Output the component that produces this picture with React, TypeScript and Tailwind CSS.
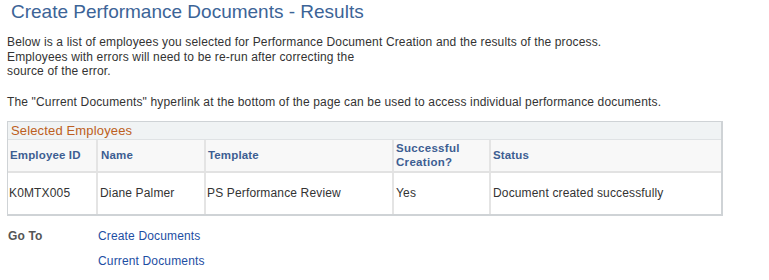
import React from "react";

export default function App() {
  const font = { fontFamily: '"Liberation Sans", Arial, sans-serif' };
  return (
    <div className="w-[769px] h-[280px] bg-white text-[12px] text-[#333333] tracking-[0.15px]" style={font}>
      <div className="pl-[11px] pt-[1px] text-[19px] leading-[22px] tracking-[0px] text-[#3c6497]">
        Create Performance Documents - Results
      </div>
      <div className="pl-[7px] pt-[12px] leading-[14.5px]">
        <div>Below is a list of employees you selected for Performance Document Creation and the results of the process.</div>
        <div>Employees with errors will need to be re-run after correcting the</div>
        <div>source of the error.</div>
        <div className="h-[16.5px]" />
        <div>The "Current Documents" hyperlink at the bottom of the page can be used to access individual performance documents.</div>
      </div>
      <div className="ml-[7px] mt-[11px] w-[716px] border-t border-l border-r-2 border-b-2 border-[#cfd3d6]">
        <div className="h-[18px] bg-[#f0f3f4] border-b border-[#dfe2e4] pl-[3px] text-[13px] leading-[18px] text-[#bd5f22]">
          Selected Employees
        </div>
        <div className="flex h-[33px] bg-[#f8f8f8] border-b-2 border-[#e2e2e2] text-[11.5px] font-bold text-[#3d5e92] leading-[14px]">
          <div className="w-[90px] flex items-center pl-[2px] border-r-2 border-[#e4e4e4]">Employee ID</div>
          <div className="w-[108px] flex items-center pl-[3px] border-r-2 border-[#e4e4e4]">Name</div>
          <div className="w-[188px] flex items-center pl-[2px] border-r-2 border-[#e4e4e4]">Template</div>
          <div className="w-[97px] flex items-center pl-[2px] border-r-2 border-[#e4e4e4] tracking-[0.3px]">Successful<br />Creation?</div>
          <div className="flex-1 flex items-center pl-[2px]">Status</div>
        </div>
        <div className="flex h-[41px] bg-white text-[12px] text-[#333333]">
          <div className="w-[90px] flex items-center pl-[1px] border-r-2 border-[#e4e4e4]">K0MTX005</div>
          <div className="w-[108px] flex items-center pl-[2px] border-r-2 border-[#e4e4e4]">Diane Palmer</div>
          <div className="w-[188px] flex items-center pl-[1px] border-r-2 border-[#e4e4e4]">PS Performance Review</div>
          <div className="w-[97px] flex items-center pl-[2px] border-r-2 border-[#e4e4e4]">Yes</div>
          <div className="flex-1 flex items-center pl-[2px]">Document created successfully</div>
        </div>
      </div>
      <div className="flex pl-[8px] pt-[13px]">
        <div className="w-[90px] font-bold text-[#555555] leading-[14px]">Go To</div>
        <div className="flex flex-col gap-[11px] leading-[14px] text-[#1d4ea3]">
          <span>Create Documents</span>
          <span>Current Documents</span>
        </div>
      </div>
    </div>
  );
}
